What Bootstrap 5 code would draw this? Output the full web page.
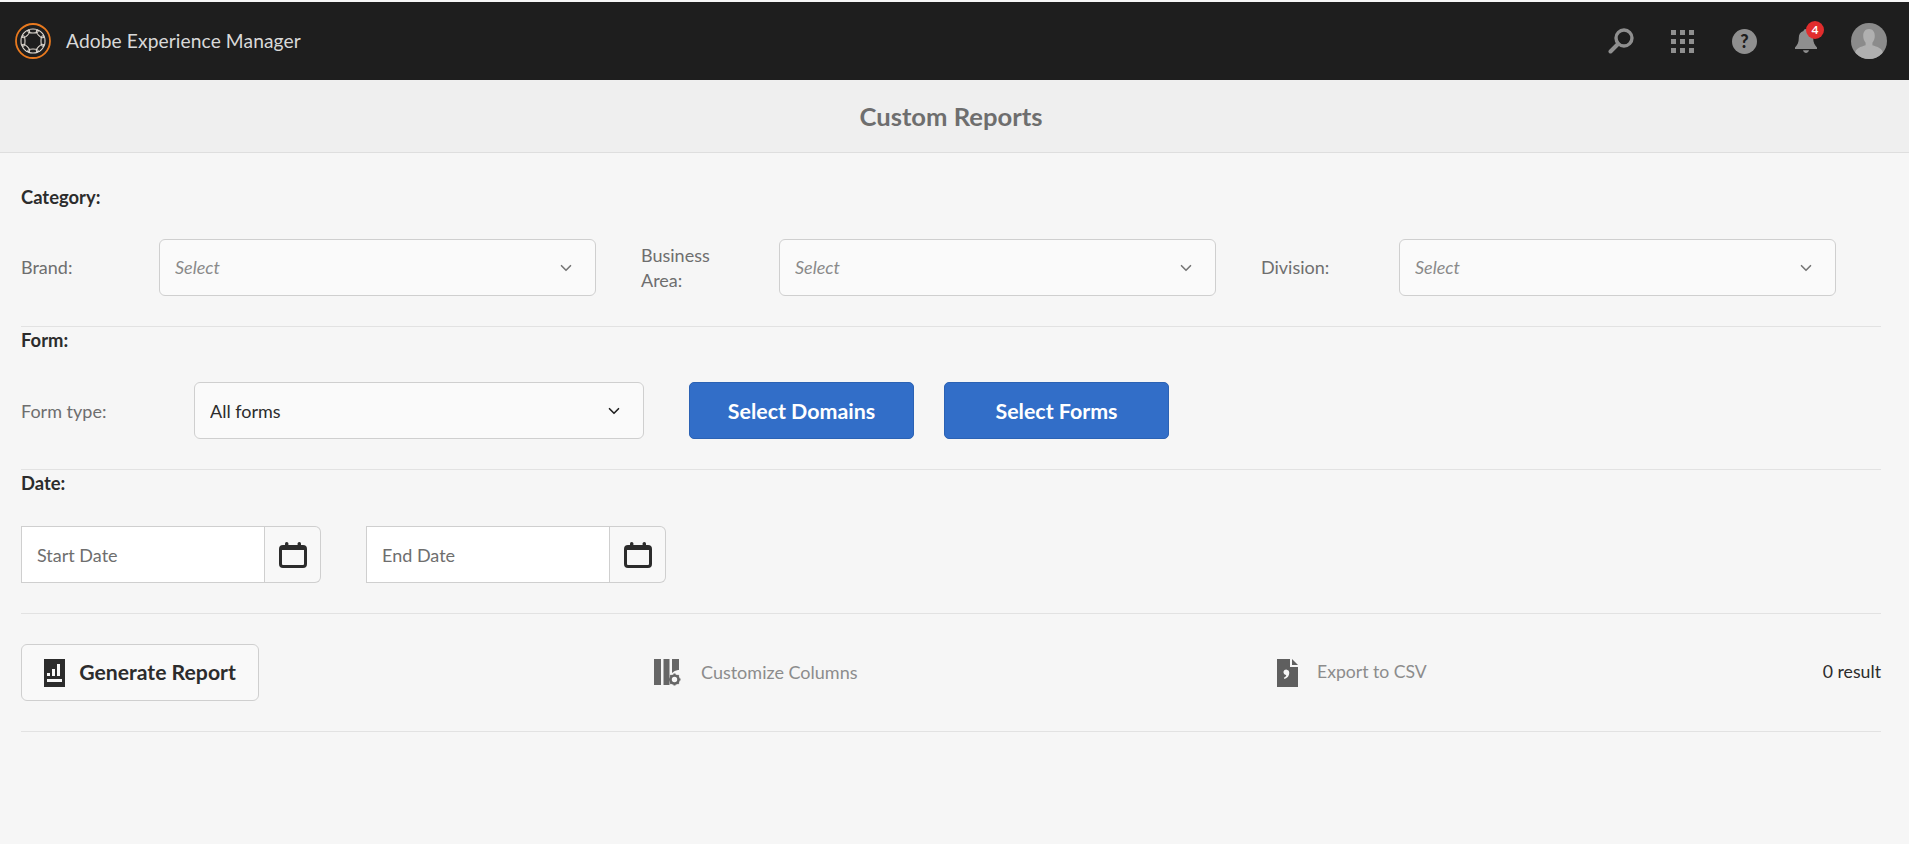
<!DOCTYPE html>
<html lang="en">
<head>
<meta charset="utf-8">
<title>Custom Reports</title>
<link rel="stylesheet" href="https://cdn.jsdelivr.net/npm/bootstrap@5.3.0/dist/css/bootstrap.min.css">
<style>
:root{--line:#e2e2e2;--box:#cfcfcf;}
html,body{height:100%;}
body{background:#f6f6f6;font-family:Lato,"Noto Sans",sans-serif;font-size:18px;color:#2c2c2c;padding-top:2px;overflow:hidden;}
.aem-bar{background:#1e1e1e;height:78px;padding:0 9px 0 15px;}
.aem-logo{width:36px;height:36px;margin-right:15px;}
.aem-name{color:#d9d9d9;font-size:19.2px;letter-spacing:.1px;}
.aem-slot{width:62px;height:78px;position:relative;}
.aem-slot.nudge{padding-right:2px;}
.aem-badge{position:absolute;left:30px;top:19px;width:18px;height:18px;border-radius:50%;background:#e12d2d;color:#fff;font-size:12px;font-weight:700;line-height:18px;text-align:center;}
.aem-title{background:#efefef;height:73px;border-bottom:1px solid #dedede;color:#6e6e6e;font-size:25.6px;font-weight:700;padding:0 7px 0 0;}
.aem-main{padding:0 28px 0 21px;}
.aem-sec{border-bottom:1px solid var(--line);padding-bottom:30px;}
.aem-head{font-weight:700;font-size:18.4px;line-height:24px;color:#2c2c2c;padding-top:1px;margin-bottom:30px;height:25px;}
.aem-sec.first{padding-top:31px;}
.aem-sec.dated .aem-head{margin-bottom:31px;}
.aem-sec.tools{padding-top:30px;}
.aem-fields{gap:45px;height:57px;}
.aem-label{color:#6e6e6e;line-height:25px;flex:none;}
.aem-w138{width:138px;padding-right:40px;}
.aem-w173{width:173px;padding-top:2px;}
.aem-pick.form-select{width:437px;height:57px;flex:none;border-color:var(--box);border-radius:6px;background-color:#fafafa;padding:0 40px 0 15px;font-size:18px;font-style:italic;color:#8a8a8a;box-shadow:none;background-position:right 21px center;background-size:16px 12px;background-image:url("data:image/svg+xml,%3csvg xmlns='http://www.w3.org/2000/svg' viewBox='0 0 16 16'%3e%3cpath fill='none' stroke='%23777' stroke-linecap='round' stroke-linejoin='round' stroke-width='2.2' d='m2 5 6 6 6-6'/%3e%3c/svg%3e");}
.aem-pick.wide.form-select{width:450px;font-style:normal;color:#2c2c2c;padding-top:2px;background-position:right 21px center;background-image:url("data:image/svg+xml,%3csvg xmlns='http://www.w3.org/2000/svg' viewBox='0 0 16 16'%3e%3cpath fill='none' stroke='%23222' stroke-linecap='round' stroke-linejoin='round' stroke-width='2.2' d='m2 5 6 6 6-6'/%3e%3c/svg%3e");}
.aem-blue.btn{width:225px;height:57px;background:#326ec8;border:1px solid #2b62b4;border-radius:5px;color:#fff;font-weight:700;font-size:21.4px;padding:2px 0 0;}
.aem-ml46{margin-left:45px;}
.aem-ml30{margin-left:30px;}
.aem-date.input-group{width:300px;height:57px;flex-wrap:nowrap;}
.aem-date .form-control{border-color:var(--box);border-radius:0;background:#fff;font-size:18px;padding:0 15px;box-shadow:none;height:57px;}
.aem-date .form-control::placeholder{color:#6e6e6e;opacity:1;}
.aem-date .btn{width:56px;flex:none;border:1px solid var(--box);border-left:0;background:#f8f8f8;border-radius:0 6px 6px 0;padding:0;display:flex;align-items:center;justify-content:center;margin-left:0!important;}
.aem-gap45{gap:45px;}
.aem-tools{display:grid;grid-template-columns:633px 623px 1fr;align-items:center;height:57px;}
.aem-gen.btn{width:238px;height:57px;background:#f9f9f9;border:1px solid var(--box);border-radius:6px;color:#2c2c2c;font-size:21.2px;font-weight:700;padding:0;gap:14px;}
.aem-act{color:#8c8c8c;font-size:18px;gap:19px;}
.aem-act.slim{font-size:17.6px;}
.aem-res{color:#2c2c2c;font-size:17.7px;}
</style>
</head>
<body>
<nav class="aem-bar d-flex align-items-center">
  <svg class="aem-logo" viewBox="0 0 36 36" aria-hidden="true"><circle cx="18" cy="18" r="17" fill="none" stroke="#e8791e" stroke-width="1.800"/><g fill="none" stroke="#e0dad2" stroke-width="1.100"><ellipse cx="18" cy="8" rx="5.200" ry="2"/><ellipse cx="18" cy="28" rx="5.200" ry="2"/><ellipse cx="8" cy="18" rx="2" ry="5.200"/><ellipse cx="28" cy="18" rx="2" ry="5.200"/><ellipse cx="10.900" cy="10.900" rx="4.800" ry="2" transform="rotate(-45 10.900 10.900)"/><ellipse cx="25.100" cy="10.900" rx="4.800" ry="2" transform="rotate(45 25.100 10.900)"/><ellipse cx="10.900" cy="25.100" rx="4.800" ry="2" transform="rotate(45 10.900 25.100)"/><ellipse cx="25.100" cy="25.100" rx="4.800" ry="2" transform="rotate(-45 25.100 25.100)"/></g></svg>
  <span class="aem-name">Adobe Experience Manager</span>
  <div class="ms-auto d-flex align-items-center">
    <div class="aem-slot d-flex align-items-center justify-content-center">
      <svg width="26" height="26" viewBox="0 0 26 26" aria-hidden="true"><circle cx="16" cy="10" r="8" fill="none" stroke="#8f8f8f" stroke-width="3.400"/><path d="M10 16 2.500 23.500" stroke="#8f8f8f" stroke-width="4" stroke-linecap="round"/></svg>
    </div>
    <div class="aem-slot nudge d-flex align-items-center justify-content-center">
      <svg width="23" height="23" viewBox="0 0 23 23" fill="#8f8f8f" aria-hidden="true"><rect width="5" height="5"/><rect x="9" width="5" height="5"/><rect x="18" width="5" height="5"/><rect y="9" width="5" height="5"/><rect x="9" y="9" width="5" height="5"/><rect x="18" y="9" width="5" height="5"/><rect y="18" width="5" height="5"/><rect x="9" y="18" width="5" height="5"/><rect x="18" y="18" width="5" height="5"/></svg>
    </div>
    <div class="aem-slot nudge d-flex align-items-center justify-content-center">
      <svg width="25" height="25" viewBox="0 0 25 25" aria-hidden="true"><circle cx="12.500" cy="12.500" r="12.500" fill="#8f8f8f"/><text x="12.500" y="19" text-anchor="middle" font-family="Lato,sans-serif" font-size="18" font-weight="900" fill="#1e1e1e">?</text></svg>
    </div>
    <div class="aem-slot nudge d-flex align-items-center justify-content-center">
      <svg width="22" height="24" viewBox="0 0 22 24" fill="#8f8f8f" aria-hidden="true"><path d="M11 0c1.500 0 2.300.9 2.500 2 3.300.9 4.700 3.600 4.700 7 0 4.600 1.300 7 3.800 9.500v1.500H0v-1.500C2.500 16 3.800 13.600 3.800 9c0-3.400 1.400-6.100 4.700-7C8.700.9 9.500 0 11 0z"/><path d="M8 21.300h6c-.6 1.700-1.700 2.700-3 2.700s-2.400-1-3-2.700z"/></svg>
      <span class="aem-badge">4</span>
    </div>
    <div class="aem-slot d-flex align-items-center justify-content-center">
      <svg width="36" height="36" viewBox="0 0 36 36" aria-hidden="true"><defs><clipPath id="av"><circle cx="18" cy="18" r="18"/></clipPath></defs><circle cx="18" cy="18" r="18" fill="#8b8b8b"/><g clip-path="url(#av)" fill="#b0b0b0"><path d="M18 6c3.800 0 5.800 2.900 5.800 6.800 0 3-1 5.400-2.400 6.900v2.600c4.400 1.500 10.600 2.800 10.600 8.700v6H4v-6c0-5.900 6.200-7.200 10.600-8.700v-2.600c-1.400-1.500-2.400-3.900-2.400-6.900C12.200 8.900 14.200 6 18 6z"/></g></svg>
    </div>
  </div>
</nav>
<header class="aem-title d-flex align-items-center justify-content-center">Custom Reports</header>
<main class="aem-main">
  <section class="aem-sec first">
    <div class="aem-head">Category:</div>
    <div class="d-flex aem-fields">
      <div class="d-flex align-items-center">
        <label class="aem-label aem-w138">Brand:</label>
        <select class="form-select aem-pick"><option>Select</option></select>
      </div>
      <div class="d-flex align-items-center">
        <label class="aem-label aem-w138">Business Area:</label>
        <select class="form-select aem-pick"><option>Select</option></select>
      </div>
      <div class="d-flex align-items-center">
        <label class="aem-label aem-w138">Division:</label>
        <select class="form-select aem-pick"><option>Select</option></select>
      </div>
    </div>
  </section>
  <section class="aem-sec">
    <div class="aem-head">Form:</div>
    <div class="d-flex align-items-center">
      <label class="aem-label aem-w173">Form type:</label>
      <select class="form-select aem-pick wide"><option>All forms</option></select>
      <button class="btn aem-blue aem-ml46" type="button">Select Domains</button>
      <button class="btn aem-blue aem-ml30" type="button">Select Forms</button>
    </div>
  </section>
  <section class="aem-sec dated">
    <div class="aem-head">Date:</div>
    <div class="d-flex aem-gap45">
      <div class="input-group aem-date">
        <input class="form-control" type="text" placeholder="Start Date">
        <button class="btn" type="button" aria-label="Start date"><svg width="28" height="26" viewBox="0 0 28 26" aria-hidden="true"><rect x="1.500" y="4.500" width="25" height="20" rx="2.500" fill="none" stroke="#2c2c2c" stroke-width="3"/><rect x="3" y="6" width="22" height="2" fill="#2c2c2c"/><rect x="6" y="0" width="3.400" height="7" rx="1.600" fill="#2c2c2c"/><rect x="18.600" y="0" width="3.400" height="7" rx="1.600" fill="#2c2c2c"/></svg></button>
      </div>
      <div class="input-group aem-date">
        <input class="form-control" type="text" placeholder="End Date">
        <button class="btn" type="button" aria-label="End date"><svg width="28" height="26" viewBox="0 0 28 26" aria-hidden="true"><rect x="1.500" y="4.500" width="25" height="20" rx="2.500" fill="none" stroke="#2c2c2c" stroke-width="3"/><rect x="3" y="6" width="22" height="2" fill="#2c2c2c"/><rect x="6" y="0" width="3.400" height="7" rx="1.600" fill="#2c2c2c"/><rect x="18.600" y="0" width="3.400" height="7" rx="1.600" fill="#2c2c2c"/></svg></button>
      </div>
    </div>
  </section>
  <section class="aem-sec tools">
    <div class="aem-tools">
      <div><button class="btn aem-gen d-flex align-items-center justify-content-center" type="button"><svg width="21" height="28" viewBox="0 0 21 28" aria-hidden="true"><path fill="#2c2c2c" fill-rule="evenodd" d="M0 0h21v28H0zM3 14v3h3v-3zm5-4v7h3v-7zm5-5v12h3V5zM3 20v3h15v-3z"/></svg>Generate Report</button></div>
      <div class="d-flex align-items-center aem-act">
        <svg width="28" height="28" viewBox="0 0 28 28" aria-hidden="true"><g fill="#666"><rect width="7" height="26"/><rect x="9.500" width="6" height="26"/><path d="M18 0h7v11h-1a9 9 0 0 0-6 3z"/></g><circle cx="20.500" cy="20.500" r="4" fill="none" stroke="#666" stroke-width="2.600"/><g stroke="#666" stroke-width="2"><path d="M20.500 14.500v2.500M20.500 24v2.500M14.500 20.500H17M24 20.500h2.500M16.300 16.300l1.800 1.800M22.900 22.900l1.800 1.800M16.300 24.700l1.800-1.800M22.900 18.100l1.800-1.800"/></g></svg>
        <span>Customize Columns</span>
      </div>
      <div class="d-flex align-items-center">
        <div class="d-flex align-items-center aem-act slim">
          <svg width="21" height="28" viewBox="0 0 21 28" aria-hidden="true"><path fill="#5f5f5f" d="M0 0h13v8h8v20H0z"/><path fill="#5f5f5f" d="M15 0l6 6h-6z"/><path fill="#f6f6f6" d="M6.500 12.500a3 3 0 0 1 5.800 1.200c0 3-1.800 5.300-4.800 6.300l-.7-1.200c1.300-.6 2.200-1.500 2.500-2.800a3 3 0 0 1-2.800-3.500z"/></svg>
          <span>Export to CSV</span>
        </div>
        <span class="aem-res ms-auto">0 result</span>
      </div>
    </div>
  </section>
</main>
</body>
</html>
